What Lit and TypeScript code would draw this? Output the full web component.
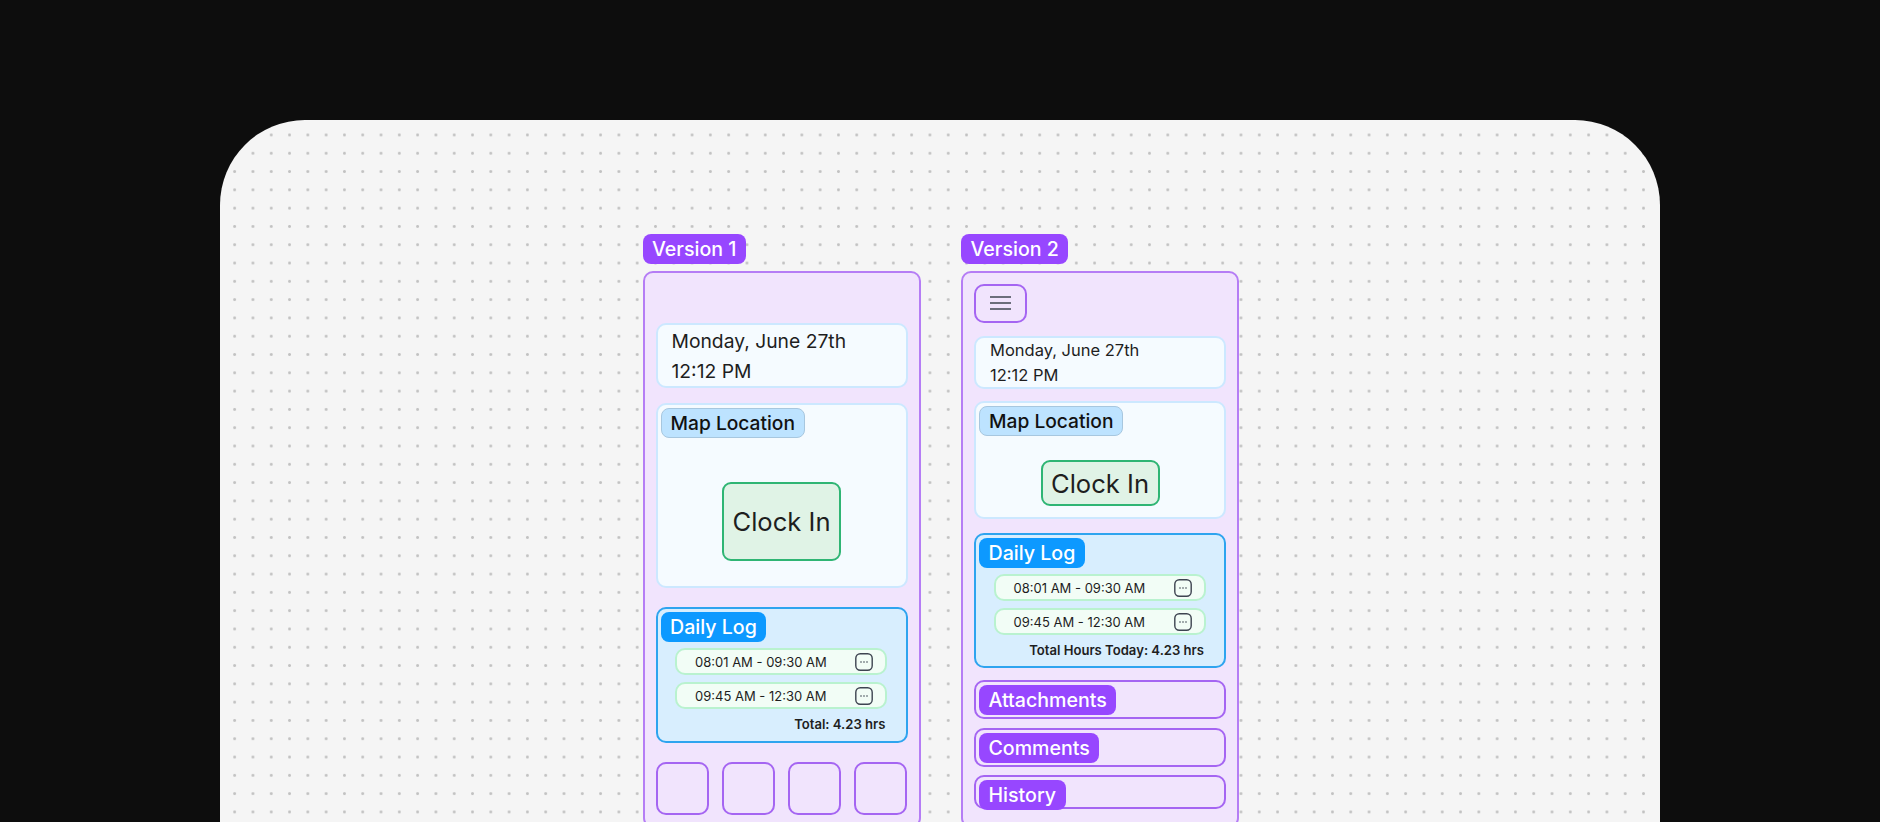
import { LitElement, html, css, svg } from 'lit';
import { customElement } from 'lit/decorators.js';

const menuIcon = svg`<line x1="1" y1="4" x2="22" y2="4"/><line x1="1" y1="10" x2="22" y2="10"/><line x1="1" y1="16" x2="22" y2="16"/>`;

const times = ['08:01 AM - 09:30 AM', '09:45 AM - 12:30 AM'];

@customElement('app-root')
export class AppRoot extends LitElement {
  static styles = css`
    :host {
      display: block;
      width: 1880px;
      height: 822px;
      overflow: hidden;
      padding-top: 120px;
      box-sizing: border-box;
      background: #0d0d0d;
      font-family: Inter, "Liberation Sans", sans-serif;
      color: #1e1e1e;
    }
    * { box-sizing: border-box; }
    .canvas {
      width: 1440px;
      height: 702px;
      margin-left: 220px;
      padding: 114px 0 0 422.5px;
      display: flex;
      gap: 40.5px;
      overflow: hidden;
      border-radius: 85px 85px 0 0;
      background-color: #f5f5f5;
      background-image: radial-gradient(circle at center, #c2c2c2 0, #c2c2c2 1px, transparent 1.9px);
      background-size: 18.3px 18.3px;
      background-position: 5.5px 5.8px;
    }
    .version { display: flex; flex-direction: column; align-items: flex-start; flex: none; }
    .tag {
      display: inline-flex;
      align-items: center;
      height: 30px;
      padding: 0 9.5px;
      border-radius: 8px;
      font-size: 19.6px;
      font-weight: 500;
      white-space: nowrap;
      color: #fff;
      background: #9747ff;
      flex: none;
    }
    .frame {
      width: 278px;
      height: 557px;
      margin-top: 6.5px;
      padding: 0 11px;
      border: 2px solid #b57df5;
      border-radius: 10px;
      background: #f1e4fd;
      display: flex;
      flex-direction: column;
      flex: none;
    }
    .card {
      border: 2px solid #cce8ff;
      border-radius: 10px;
      background: #f5fbff;
      flex: none;
    }
    .date { padding-left: 14px; display: flex; flex-direction: column; justify-content: center; }
    .v1 .date { height: 65px; margin-top: 50.5px; font-size: 19.3px; line-height: 30px; }
    .v2 .date { height: 53px; margin-top: 13.5px; font-size: 16.5px; line-height: 25px; }
    .map { padding: 3px; display: flex; flex-direction: column; }
    .v1 .map { height: 184.5px; margin-top: 15px; }
    .v2 .map { height: 117.5px; margin-top: 12px; }
    .map .tag {
      align-self: flex-start;
      padding: 0 9px;
      font-size: 19.2px;
      background: #bde3ff;
      color: #111;
      border: 1px solid #a7c7df;
    }
    .clock {
      align-self: center;
      display: flex;
      align-items: center;
      justify-content: center;
      width: 119px;
      border: 2px solid #2fb574;
      border-radius: 9px;
      background: #e0f3e6;
      font-size: 25.6px;
    }
    .v1 .clock { height: 79px; margin-top: 44px; }
    .v2 .clock { height: 46px; margin-top: 24px; }
    .log {
      padding: 3px 3px 0;
      border: 2px solid #2ea4ef;
      border-radius: 10px;
      background: #d8eefe;
      display: flex;
      flex-direction: column;
      flex: none;
    }
    .v1 .log { height: 136px; margin-top: 19.5px; }
    .v2 .log { height: 135px; margin-top: 14.5px; }
    .log .tag { align-self: flex-start; background: #0d99ff; }
    .row {
      display: flex;
      align-items: center;
      justify-content: space-between;
      width: 212px;
      height: 27px;
      margin: 6px 0 0 14.5px;
      padding: 0 12px 0 18px;
      border: 2px solid #b9f2cf;
      border-radius: 10px;
      background: #f2fdf6;
      font-size: 13px;
    }
    .row + .row { margin-top: 7px; }
    .row svg { width: 18px; height: 18px; flex: none; }
    .total {
      align-self: flex-end;
      margin: 7px 17px 0 0;
      font-size: 13.1px;
      line-height: 16px;
      font-weight: 600;
    }
    .icons { display: flex; justify-content: space-between; margin-top: 19px; }
    .square {
      width: 53px;
      height: 53px;
      border: 2px solid #a565f2;
      border-radius: 10px;
    }
    .menu {
      width: 53px;
      height: 39px;
      margin-top: 11px;
      padding: 0 13px;
      border: 2px solid #a565f2;
      border-radius: 10px;
      display: flex;
      align-items: center;
      flex: none;
    }
    .menu svg { width: 23px; height: 20px; stroke: #333b44; stroke-width: 1.4; }
    .section {
      padding: 3px;
      border: 2px solid #a565f2;
      border-radius: 10px;
      flex: none;
    }
    .attachments { height: 39px; margin-top: 12px; }
    .comments { height: 39px; margin-top: 9px; }
    .history { height: 34px; margin-top: 8px; }
  `;

  private renderLog(total: string) {
    return html`
      <div class="log">
        <div class="tag">Daily Log</div>
        ${times.map(
          (t) => html`
            <div class="row">
              <span>${t}</span>
              <svg viewBox="0 0 18 18" fill="none">
                <rect x="0.8" y="0.8" width="16.4" height="16.4" rx="4.5" stroke="#3d4450" stroke-width="1.4" />
                <circle cx="6" cy="9" r="0.8" fill="#3d4450" />
                <circle cx="9" cy="9" r="0.8" fill="#3d4450" />
                <circle cx="12" cy="9" r="0.8" fill="#3d4450" />
              </svg>
            </div>
          `,
        )}
        <div class="total">${total}</div>
      </div>
    `;
  }

  private renderTop() {
    return html`
      <div class="card date"><div>Monday, June 27th</div><div>12:12 PM</div></div>
      <div class="card map">
        <div class="tag">Map Location</div>
        <div class="clock">Clock In</div>
      </div>
    `;
  }

  render() {
    return html`
      <div class="canvas">
        <div class="version v1">
          <div class="tag">Version 1</div>
          <div class="frame">
            ${this.renderTop()} ${this.renderLog('Total: 4.23 hrs')}
            <div class="icons">
              <div class="square"></div>
              <div class="square"></div>
              <div class="square"></div>
              <div class="square"></div>
            </div>
          </div>
        </div>
        <div class="version v2">
          <div class="tag">Version 2</div>
          <div class="frame">
            <div class="menu"><svg viewBox="0 0 23 20">${menuIcon}</svg></div>
            ${this.renderTop()} ${this.renderLog('Total Hours Today: 4.23 hrs')}
            <div class="section attachments"><div class="tag">Attachments</div></div>
            <div class="section comments"><div class="tag">Comments</div></div>
            <div class="section history"><div class="tag">History</div></div>
          </div>
        </div>
      </div>
    `;
  }
}
